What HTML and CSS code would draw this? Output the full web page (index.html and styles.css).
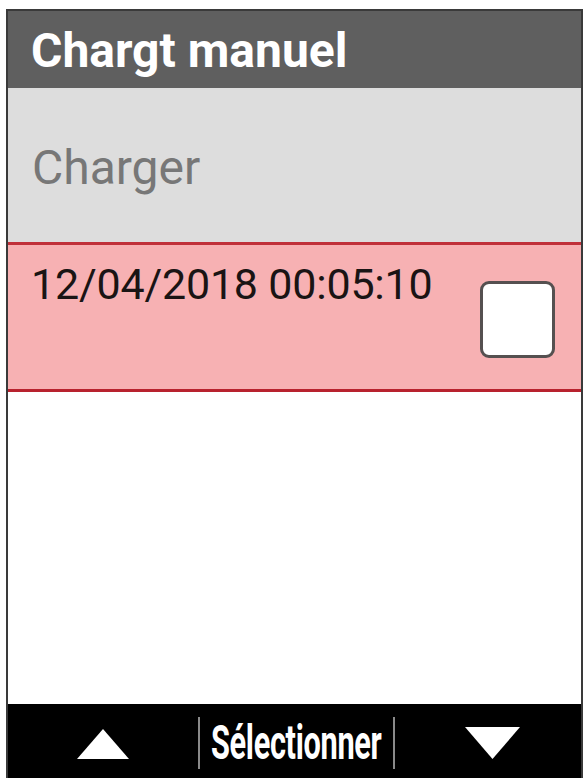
FILE: index.html
```html
<!DOCTYPE html>
<html lang="fr">
<head>
<meta charset="utf-8">
<title>Chargt manuel</title>
<link rel="stylesheet" href="styles.css">
</head>
<body>
<div class="frame">
  <div class="header">Chargt manuel</div>
  <div class="section">Charger</div>
  <div class="row-selected">
    <div class="date">12/04/2018 00:05:10</div>
    <div class="checkbox"></div>
  </div>
  <div class="empty"></div>
  <div class="bar">
    <div class="cell cell-left">
      <svg class="tri" width="52" height="30" viewBox="0 0 52 30"><polygon points="26,0 52,30 0,30" fill="#fff"/></svg>
    </div>
    <div class="divider"></div>
    <div class="cell cell-mid"><span class="label">Sélectionner</span></div>
    <div class="divider"></div>
    <div class="cell cell-right">
      <svg class="tri tri-down" width="55" height="32" viewBox="0 0 55 32"><polygon points="0,0 55,0 27.5,32" fill="#fff"/></svg>
    </div>
  </div>
</div>
</body>
</html>
```

FILE: styles.css
```css
html, body {
  margin: 0;
  padding: 0;
  background: #ffffff;
}

body {
  font-family: Roboto, "Liberation Sans", sans-serif;
  overflow: hidden;
}

.frame {
  margin: 9px 0 0 6px;
  width: 573px;
  height: 769px;
  border: 2px solid #3a3a3a;
  border-bottom: none;
  display: flex;
  flex-direction: column;
  background: #ffffff;
}

.header {
  height: 77px;
  box-sizing: border-box;
  padding: 16px 0 0 23px;
  background: #5f5f5f;
  color: #ffffff;
  font-weight: 700;
  font-size: 48px;
  line-height: 48px;
  letter-spacing: 0;
}

.section {
  height: 154px;
  box-sizing: border-box;
  padding: 56px 0 0 24px;
  background: #dddddd;
  color: #777777;
  font-size: 48px;
  line-height: 47px;
}

.row-selected {
  height: 150px;
  box-sizing: border-box;
  border-top: 3px solid #c0303a;
  border-bottom: 3px solid #b8222e;
  background: #f7b1b3;
  display: flex;
  justify-content: space-between;
  align-items: flex-start;
}

.date {
  padding: 18px 0 0 23px;
  color: #1a1414;
  font-size: 43px;
  line-height: 43px;
  letter-spacing: -0.2px;
}

.checkbox {
  margin: 36px 26px 0 0;
  width: 69px;
  height: 71px;
  background: #ffffff;
  border: 3px solid #555050;
  border-radius: 9px;
}

.empty {
  flex: 1;
  background: #ffffff;
}

.bar {
  height: 76px;
  background: #000000;
  display: flex;
  align-items: flex-start;
}

.cell {
  height: 76px;
  display: flex;
  justify-content: center;
}

.cell-left {
  width: 190px;
}

.cell-left .tri {
  margin-top: 25px;
}

.cell-mid {
  width: 193px;
  color: #ffffff;
}

.label {
  display: inline-block;
  font-weight: 700;
  font-size: 48px;
  line-height: 48px;
  margin-top: 15px;
  transform: scaleX(0.64);
  white-space: nowrap;
  letter-spacing: -0.5px;
}

.cell-right {
  flex: 1;
}

.cell-right .tri {
  margin-top: 23px;
  margin-left: 8px;
}

.divider {
  width: 2px;
  height: 52px;
  margin-top: 13px;
  background: #8a8a8a;
}
```
